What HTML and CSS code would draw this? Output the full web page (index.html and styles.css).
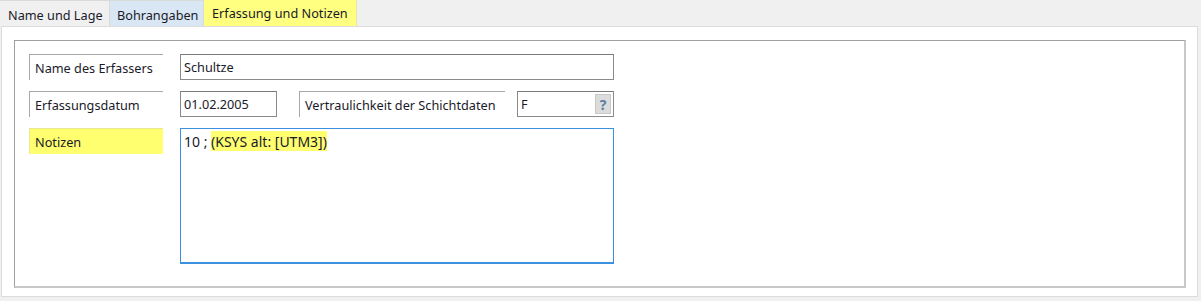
FILE: index.html
```html
<!DOCTYPE html>
<html lang="de">
<head>
<meta charset="utf-8">
<title>Erfassung und Notizen</title>
<link rel="stylesheet" href="styles.css">
</head>
<body>
<div class="window">
  <div class="tabs">
    <div class="tab">Name und Lage</div>
    <div class="tab tab-blue">Bohrangaben</div>
    <div class="tab tab-active">Erfassung und Notizen</div>
  </div>
  <div class="panel">
    <div class="group">
      <div class="row">
        <div class="label">Name des Erfassers</div>
        <div class="input wide">Schultze</div>
      </div>
      <div class="row">
        <div class="label">Erfassungsdatum</div>
        <div class="input short">01.02.2005</div>
        <div class="label label-mid">Vertraulichkeit der Schichtdaten</div>
        <div class="input short combo"><span>F</span><span class="help">?</span></div>
      </div>
      <div class="row">
        <div class="label label-yellow">Notizen</div>
        <div class="textarea">10 ; <span class="mark">(KSYS alt: [UTM3])</span></div>
      </div>
    </div>
  </div>
</div>
</body>
</html>
```

FILE: styles.css
```css
html, body {
  margin: 0;
  padding: 0;
}
body {
  background: #f0f0f0;
  font-family: "Segoe UI", "Noto Sans", "Open Sans", sans-serif;
  font-size: 12.7px;
  color: #1a1a2a;
  width: 1201px;
  height: 301px;
  overflow: hidden;
}
.window {
  display: flex;
  flex-direction: column;
  height: 301px;
}
.tabs {
  display: flex;
  height: 26px;
  align-items: stretch;
}
.tab {
  box-sizing: border-box;
  padding: 2px 6px 0 8px;
  display: flex;
  align-items: center;
  border: 1px solid #dadada;
  border-bottom: none;
  border-left: none;
  background: #f0f0f0;
  white-space: nowrap;
}
.tab:first-child {
  width: 110px;
}
.tab-blue {
  width: 94px;
  padding-left: 7px;
  background: #d9e7f4;
}
.tab-active {
  width: 153px;
  background: #ffff80;
  border-color: #e6e6a0;
  height: 27px;
  margin-top: -1px;
  padding-top: 0;
}
.panel {
  box-sizing: border-box;
  margin: 0 3px 4px 1px;
  height: 271px;
  background: #fff;
  border: 1px solid #dcdcdc;
  padding: 13px 11px 9px 12px;
}
.group {
  box-sizing: border-box;
  height: 248px;
  border-top: 1px solid #a0a0a0;
  border-left: 1px solid #a0a0a0;
  border-right: 2px solid #c8c8c8;
  border-bottom: 2px solid #c8c8c8;
  padding: 13px 14px 0 14px;
  display: flex;
  flex-direction: column;
  gap: 11px;
}
.row {
  display: flex;
  align-items: flex-start;
}
.label {
  box-sizing: border-box;
  width: 134px;
  height: 26px;
  border-top: 1px solid #a8a8a8;
  border-left: 1px solid #a8a8a8;
  padding-left: 5px;
  display: flex;
  align-items: center;
  margin-right: 17px;
  white-space: nowrap;
}
.label-mid {
  width: 206px;
  margin-left: 22px;
  margin-right: 12px;
}
.label-yellow {
  background: #ffff70;
  border-color: #e8e890;
}
.input {
  box-sizing: border-box;
  height: 26px;
  border: 1px solid #8a8a8a;
  border-top-color: #7a7a7a;
  padding-left: 3px;
  display: flex;
  align-items: center;
  background: #fff;
}
.wide {
  width: 434px;
}
.short {
  width: 97px;
}
.combo {
  justify-content: space-between;
  padding-right: 2px;
}
.help {
  box-sizing: border-box;
  width: 16px;
  height: 20px;
  background: #dcdcdc;
  border: 1px solid #c8c8c8;
  color: #5a7ea6;
  font-weight: bold;
  font-size: 14px;
  display: flex;
  align-items: center;
  justify-content: center;
}
.textarea {
  box-sizing: border-box;
  width: 434px;
  height: 136px;
  border: 1px solid #3d8fe0;
  border-bottom-width: 2px;
  padding: 3px 3px;
  background: #fff;
  white-space: pre;
  font-size: 14px;
  line-height: 20px;
}
.mark {
  background: #ffff70;
  padding: 1px 0 0;
}
```
